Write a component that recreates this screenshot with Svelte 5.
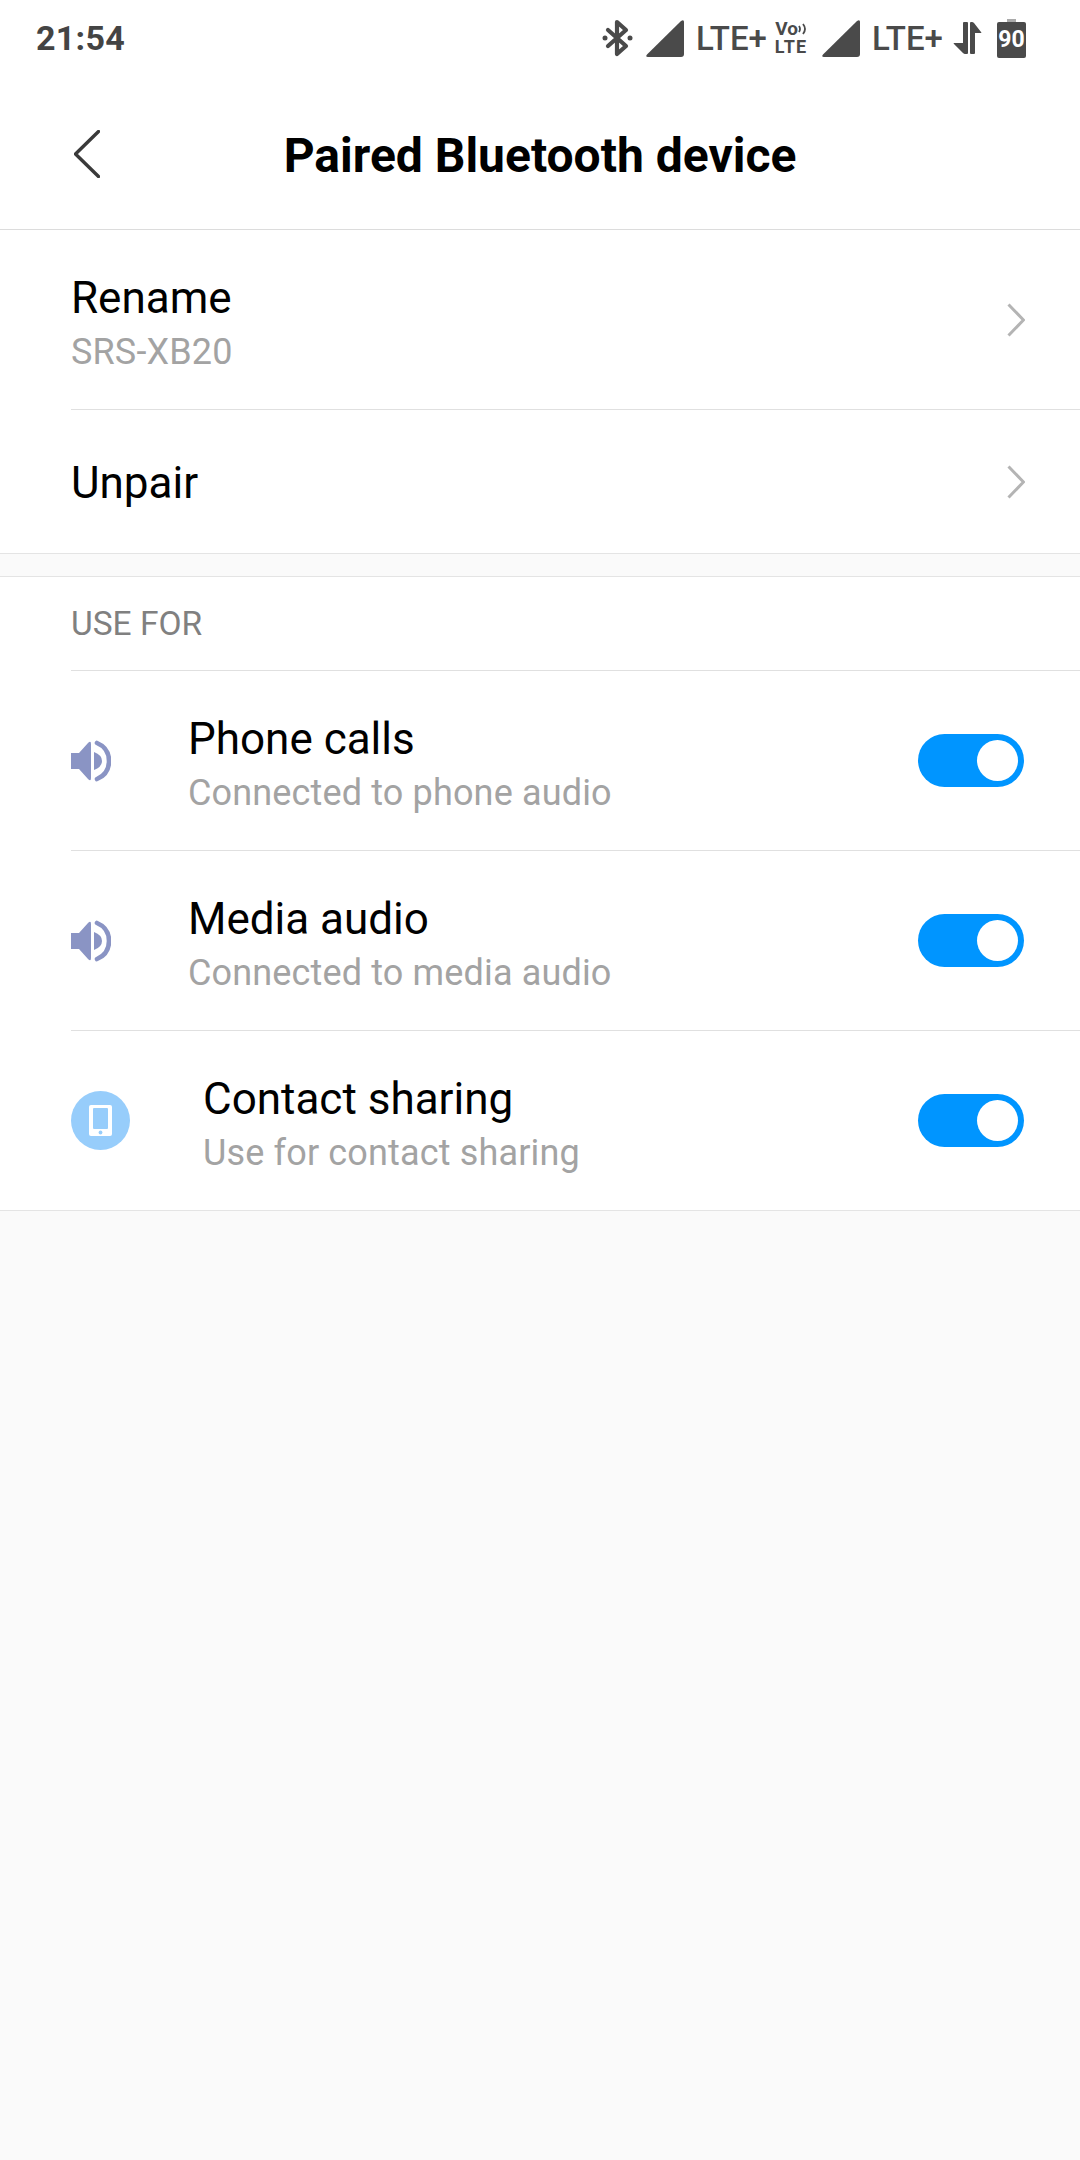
<script>
  const toggles = [
    { icon: 'speaker', title: 'Phone calls', sub: 'Connected to phone audio' },
    { icon: 'speaker', title: 'Media audio', sub: 'Connected to media audio' },
    { icon: 'phone', title: 'Contact sharing', sub: 'Use for contact sharing' }
  ];
</script>

<div class="page">
  <div class="top">
    <div class="status">
      <span class="time">21:54</span>
      <div class="sys">
        <svg class="bt" width="32" height="40" viewBox="0 0 32 40"><g fill="none" stroke="#4a4a4a" stroke-width="4.2" stroke-linecap="round" stroke-linejoin="round"><path d="M6 12 L24 28 L15 36 V4 L24 12 L6 28"/></g><circle cx="3" cy="20" r="2.5" fill="#4a4a4a"/><circle cx="28" cy="20" r="2.5" fill="#4a4a4a"/></svg>
        <svg class="sig" width="38" height="38" viewBox="0 0 38 38"><path d="M1 35.5 L35 2 Q38 0 38 3 V35 Q38 38 35 38 H2 Q-1 38 1 35.5Z" fill="#4a4a4a"/></svg>
        <span class="lte">LTE+</span>
        <div class="volte"><span class="vo">Vo<svg width="9" height="12" viewBox="0 0 9 12"><path d="M1 3 Q3 6 1 9 M5 1 Q9 6 5 11" fill="none" stroke="#4a4a4a" stroke-width="1.8"/></svg></span><span class="vl">LTE</span></div>
        <svg class="sig" width="38" height="38" viewBox="0 0 38 38"><path d="M1 35.5 L35 2 Q38 0 38 3 V35 Q38 38 35 38 H2 Q-1 38 1 35.5Z" fill="#4a4a4a"/></svg>
        <span class="lte l2">LTE+</span>
        <svg class="arrows" width="29" height="32" viewBox="0 0 29 32"><path d="M10 1 Q10 0 11 0 H14 Q15 0 15 1 V31 Q15 32 14 32 H12 Q11 32 10 31 L1 22 Q0 21 1 21 H10Z" fill="#4a4a4a"/><path d="M17 1 Q17 0 18 0 H19 Q20 0 21 1 L28 10 Q29 11 28 11 H22 V31 Q22 32 21 32 H18 Q17 32 17 31Z" fill="#4a4a4a"/></svg>
        <div class="batt"><span class="cap"></span><span class="body">90</span></div>
      </div>
    </div>
    <header class="bar">
      <svg class="back" width="26" height="48" viewBox="0 0 26 48"><path d="M24.5 1.5 L1.5 24 L24.5 46.5" fill="none" stroke="#3a3a3a" stroke-width="3.4" stroke-linecap="round" stroke-linejoin="round"/></svg>
      <h1>Paired Bluetooth device</h1>
    </header>
  </div>

  <section class="group first">
    <div class="row nav tall">
      <div class="text two"><div class="title">Rename</div><div class="sub">SRS-XB20</div></div>
      <svg class="chev" width="18" height="34" viewBox="0 0 18 34"><path d="M1.5 1.5 L16.5 17 L1.5 32.5" fill="none" stroke="#b4b4b4" stroke-width="3"/></svg>
    </div>
    <div class="row nav short last">
      <div class="text"><div class="title unpair">Unpair</div></div>
      <svg class="chev" width="18" height="34" viewBox="0 0 18 34"><path d="M1.5 1.5 L16.5 17 L1.5 32.5" fill="none" stroke="#b4b4b4" stroke-width="3"/></svg>
    </div>
  </section>

  <section class="group second">
    <div class="label">USE FOR</div>
    {#each toggles as t, i}
      <div class="row toggle" class:last={i === toggles.length - 1}>
        {#if t.icon === 'speaker'}
          <svg class="ic spk" width="40" height="42" viewBox="0 0 40 42"><path d="M0 13 H8 L17 3 Q20 0 20 4 V38 Q20 42 17 39 L8 29 H0Z M23 12 Q31 15 31 21 Q31 27 23 30Z" fill="#8a94c4"/><path d="M26 3 Q38 8 38 21 Q38 34 26 39" fill="none" stroke="#8a94c4" stroke-width="4.6" stroke-linecap="round"/></svg>
        {:else}
          <svg class="ic phn" width="59" height="59" viewBox="0 0 59 59"><circle cx="29.5" cy="29.5" r="29.5" fill="#97cdfb"/><rect x="18" y="14" width="23" height="31" rx="2" fill="#fff"/><rect x="22" y="17" width="15" height="21" rx="1" fill="#97cdfb"/><circle cx="29.5" cy="41.5" r="1.9" fill="#97cdfb"/></svg>
        {/if}
        <div class="text two"><div class="title">{t.title}</div><div class="sub">{t.sub}</div></div>
        <div class="switch"><span class="knob"></span></div>
      </div>
    {/each}
  </section>
</div>

<style>
  :global(body) { margin: 0; background: #fafafa; }
  .page { width: 1080px; height: 2160px; background: #fafafa; font-family: Roboto, sans-serif; color: #000; overflow: hidden; }
  .top { background: #fff; border-bottom: 1px solid #dcdcdc; height: 230px; box-sizing: border-box; }
  .status { height: 76px; display: flex; align-items: center; justify-content: space-between; padding: 0 54px 0 36px; }
  .time { font-size: 34px; font-weight: 700; color: #444; letter-spacing: 0.3px; }
  .sys { display: flex; align-items: center; color: #4a4a4a; }
  .bt { margin-right: 12px; }
  .sig { margin-right: 12px; }
  .lte { font-size: 33px; font-weight: 500; width: 70px; margin-right: 9px; white-space: nowrap; }
  .lte.l2 { margin-right: 11px; }
  .volte { display: flex; flex-direction: column; align-items: center; font-weight: 700; line-height: 18px; margin-right: 15px; width: 32px; }
  .vo { font-size: 19px; display: flex; align-items: center; }
  .vl { font-size: 18px; letter-spacing: 1.2px; }
  .arrows { margin-right: 15px; }
  .batt { display: flex; flex-direction: column; align-items: center; width: 29px; }
  .cap { width: 9px; height: 3px; background: #aaa; }
  .body { width: 29px; height: 36px; background: #4a4a4a; color: #fff; font-size: 23px; font-weight: 700; text-align: center; line-height: 36px; border-radius: 2px; }
  .bar { height: 153px; position: relative; display: flex; align-items: center; justify-content: center; padding-top: 5px; box-sizing: border-box; }
  .back { position: absolute; left: 74px; top: 54px; }
  h1 { margin: 0; font-size: 48px; font-weight: 700; }
  .group { background: #fff; border-bottom: 1px solid #e4e4e4; }
  .second { margin-top: 22px; border-top: 1px solid #e4e4e4; }
  .row { display: flex; align-items: center; margin-left: 71px; padding-right: 56px; border-bottom: 1px solid #e0e0e0; box-sizing: border-box; }
  .row.last { border-bottom: 0; }
  .tall { height: 180px; }
  .short { height: 143px; }
  .nav { justify-content: space-between; padding-right: 55px; }
  .two { padding-top: 10px; }
  .title { font-size: 44px; line-height: 54px; }
  .unpair { padding-top: 2px; }
  .sub { font-size: 36px; line-height: 54px; color: #a3a3a3; letter-spacing: 0.15px; }
  .label { height: 94px; line-height: 93px; padding-left: 71px; font-size: 33.5px; color: #808080; position: relative; }
  .label::after { content: ""; position: absolute; left: 71px; right: 0; bottom: 0; border-bottom: 1px solid #e0e0e0; }
  .toggle { height: 180px; }
  .toggle.last { height: 179px; }
  .ic { flex: none; }
  .spk { margin-right: 77px; }
  .phn { margin-right: 73px; }
  .toggle .text { flex: 1; }
  .switch { width: 106px; height: 53px; border-radius: 27px; background: #0095ff; position: relative; flex: none; }
  .knob { position: absolute; right: 6px; top: 6px; width: 41px; height: 41px; border-radius: 50%; background: #fff; }
</style>
